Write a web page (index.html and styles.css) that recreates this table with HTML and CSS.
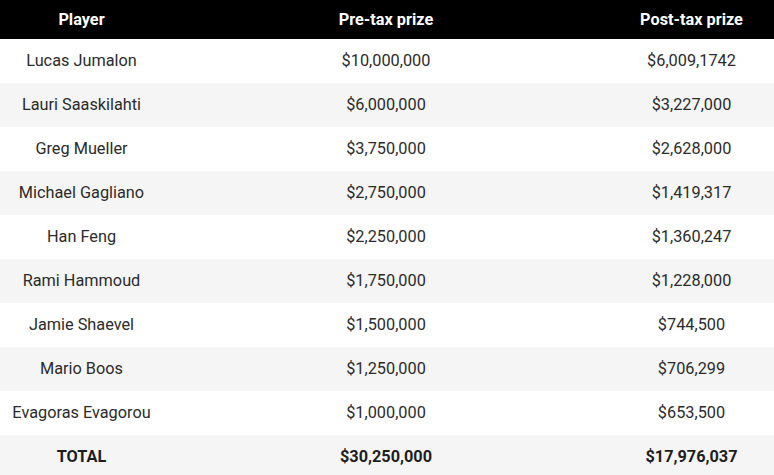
FILE: index.html
```html
<!DOCTYPE html>
<html>
<head>
<meta charset="utf-8">
<link rel="stylesheet" href="styles.css">
</head>
<body>
<table class="prizes">
  <colgroup>
    <col class="c1"><col class="c2"><col class="c3">
  </colgroup>
  <thead>
    <tr><th>Player</th><th>Pre-tax prize</th><th>Post-tax prize</th></tr>
  </thead>
  <tbody>
    <tr><td>Lucas Jumalon</td><td>$10,000,000</td><td>$6,009,1742</td></tr>
    <tr><td>Lauri Saaskilahti</td><td>$6,000,000</td><td>$3,227,000</td></tr>
    <tr><td>Greg Mueller</td><td>$3,750,000</td><td>$2,628,000</td></tr>
    <tr><td>Michael Gagliano</td><td>$2,750,000</td><td>$1,419,317</td></tr>
    <tr><td>Han Feng</td><td>$2,250,000</td><td>$1,360,247</td></tr>
    <tr><td>Rami Hammoud</td><td>$1,750,000</td><td>$1,228,000</td></tr>
    <tr><td>Jamie Shaevel</td><td>$1,500,000</td><td>$744,500</td></tr>
    <tr><td>Mario Boos</td><td>$1,250,000</td><td>$706,299</td></tr>
    <tr><td>Evagoras Evagorou</td><td>$1,000,000</td><td>$653,500</td></tr>
    <tr class="total"><td>TOTAL</td><td>$30,250,000</td><td>$17,976,037</td></tr>
  </tbody>
</table>
</body>
</html>
```
FILE: styles.css
```css
html, body {
  margin: 0;
  padding: 0;
  background: #ffffff;
}
body {
  font-family: Roboto, "Liberation Sans", sans-serif;
  font-size: 16.3px;
  color: #2b2b2b;
}
.prizes {
  width: 774px;
  border-collapse: collapse;
  table-layout: fixed;
}
.c1 { width: 163px; }
.c2 { width: 446px; }
.c3 { width: 165px; }
.prizes th {
  background: #000000;
  color: #ffffff;
  font-weight: 700;
  height: 39px;
  padding: 0;
  text-align: center;
  vertical-align: middle;
}
.prizes td {
  height: 42px;
  padding: 0 0 2px 0;
  text-align: center;
  vertical-align: middle;
}
.prizes tbody tr:nth-child(even) td {
  background: #f5f5f5;
}
.prizes tr.total td {
  font-weight: 700;
  color: #1e1e1e;
}
```
